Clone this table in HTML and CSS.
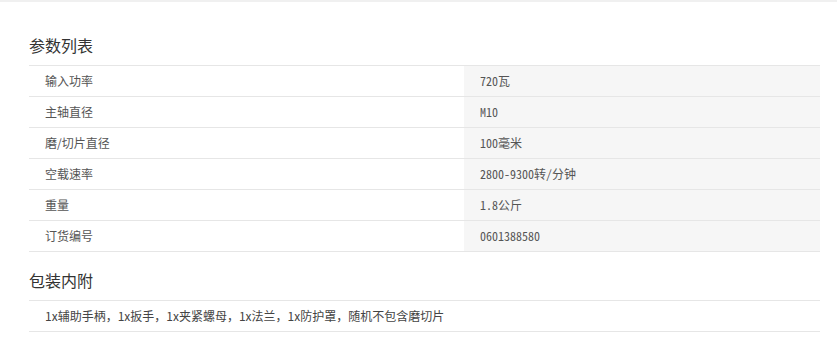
FILE: index.html
```html
<!DOCTYPE html>
<html lang="zh-CN">
<head>
<meta charset="utf-8">
<title>参数列表</title>
<link rel="stylesheet" href="styles.css">
</head>
<body>
<div class="topbar"></div>
<main class="content">
  <section class="block">
    <h2 class="title">参数列表</h2>
    <div class="specs">
      <div class="label">输入功率</div><div class="value">720瓦</div>
      <div class="label">主轴直径</div><div class="value">M10</div>
      <div class="label">磨/切片直径</div><div class="value">100毫米</div>
      <div class="label">空载速率</div><div class="value">2800-9300转/分钟</div>
      <div class="label">重量</div><div class="value">1.8公斤</div>
      <div class="label">订货编号</div><div class="value">0601388580</div>
    </div>
  </section>
  <section class="block block-second">
    <h2 class="title">包装内附</h2>
    <div class="package">1x辅助手柄，1x扳手，1x夹紧螺母，1x法兰，1x防护罩，随机不包含磨切片</div>
  </section>
</main>
</body>
</html>
```
FILE: styles.css
```css
html, body {
  margin: 0;
  padding: 0;
  background: #fff;
}
body {
  font-family: "Noto Sans CJK SC", "Noto Sans", sans-serif;
  font-size: 12px;
  color: #555;
}
.topbar {
  height: 2px;
  background: #f0f0f0;
}
.content {
  padding: 31px 17px 0 29px;
}
.block {
  width: 791px;
}
.block-second {
  margin-top: 16px;
}
.title {
  margin: 0 0 8px 0;
  font-size: 16px;
  font-weight: normal;
  line-height: 24px;
  color: #333;
}
.specs {
  display: grid;
  grid-template-columns: 435px 1fr;
  border-top: 1px solid #e6e6e6;
}
.label, .value, .package {
  height: 30px;
  line-height: 30px;
  padding: 0 16px;
  border-bottom: 1px solid #e6e6e6;
  white-space: nowrap;
}
.value {
  background: #f6f6f6;
  font-feature-settings: "hwid" 1;
}
.package {
  border-top: 1px solid #e6e6e6;
  color: #444;
}
```
